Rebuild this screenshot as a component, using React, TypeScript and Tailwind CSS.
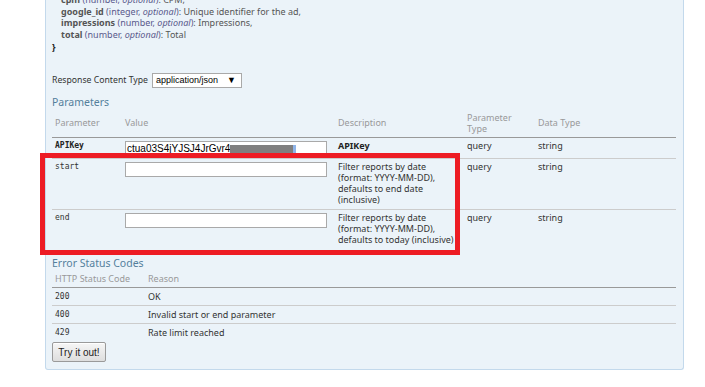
const modelLines = [
  { name: 'cpm', type: 'number', desc: 'CPM,' },
  { name: 'google_id', type: 'integer', desc: 'Unique identifier for the ad,' },
  { name: 'impressions', type: 'number', desc: 'Impressions,' },
  { name: 'total', type: 'number', desc: 'Total' },
];

const params = [
  { name: 'APIKey', strong: true, value: 'ctua03S4jYJSJ4JrGvr4', desc: 'APIKey', type: 'query', dataType: 'string' },
  {
    name: 'start',
    strong: false,
    value: '',
    desc: 'Filter reports by date (format: YYYY-MM-DD), defaults to end date (inclusive)',
    type: 'query',
    dataType: 'string',
  },
  {
    name: 'end',
    strong: false,
    value: '',
    desc: 'Filter reports by date (format: YYYY-MM-DD), defaults to today (inclusive)',
    type: 'query',
    dataType: 'string',
  },
];

const errors = [
  { code: '200', reason: 'OK' },
  { code: '400', reason: 'Invalid start or end parameter' },
  { code: '429', reason: 'Rate limit reached' },
];

const mono = "font-['DejaVu_Sans_Mono',monospace] text-[8px]";

export default function App() {
  return (
    <div className="relative h-[387px] w-[705px] overflow-hidden bg-white font-['Noto_Sans',sans-serif] text-[9px] text-[#333]">
      <div className="ml-[45px] mt-[-6px] w-[639px] rounded-b-[3px] border border-t-0 border-[#c3d9ec] bg-[#ebf3f9] px-[6px] pb-[7px]">
        <div className="pl-[9px] leading-[11.5px]">
          {modelLines.map((l) => (
            <div key={l.name}>
              <span className="font-bold text-[#555]">{l.name}</span>{' '}
              <span className="text-[#5a5a8c]">
                (<span>{l.type}</span>, <span className="italic">optional</span>)
              </span>
              <span className="text-[#555]">: {l.desc}</span>
            </div>
          ))}
        </div>
        <div className="mt-px font-bold leading-[12px] text-[#222]">{'}'}</div>

        <div className="mt-[20px] flex h-[15px] items-center">
          <span className="text-[8.7px] text-[#333]">Response Content Type</span>
          <div className="ml-[4px] flex h-[15px] w-[90px] items-center justify-between border border-[#a9a9a9] bg-white pl-[3px] pr-[5px] font-['Liberation_Sans',sans-serif] text-[9px] text-black">
            <span>application/json</span>
            <span className="text-[9px]">▼</span>
          </div>
        </div>

        <h4 className="mt-[8px] text-[10.5px] leading-[13px] text-[#547f9c]">Parameters</h4>
        <table className="w-[624px] table-fixed border-collapse">
          <colgroup>
            <col className="w-[70px]" />
            <col className="w-[213px]" />
            <col className="w-[129px]" />
            <col className="w-[71px]" />
            <col className="w-[141px]" />
          </colgroup>
          <thead>
            <tr className="border-b border-[#999] text-left text-[#999]">
              <th className="pb-[3px] pt-[4px] pl-[3px] font-normal leading-[10.7px]">Parameter</th>
              <th className="pb-[3px] pt-[4px] pl-[3px] font-normal leading-[10.7px]">Value</th>
              <th className="pb-[3px] pt-[4px] pl-[3px] font-normal leading-[10.7px]">Description</th>
              <th className="pb-[3px] pt-[4px] pl-[3px] font-normal leading-[10.7px]">
                Parameter
                <br />
                Type
              </th>
              <th className="pb-[3px] pt-[4px] pl-[3px] font-normal leading-[10.7px]">Data Type</th>
            </tr>
          </thead>
          <tbody className="align-top leading-[10.7px]">
            {params.map((p, i) => {
              const cell = p.strong ? 'pt-[3px] pb-[2px] pl-[3px]' : 'pt-[3px] pb-[4px] pl-[3px]';
              return (
                <tr key={p.name} className={i < params.length - 1 ? 'border-b border-[#ccc]' : ''}>
                  <td className={`${cell} ${mono} leading-[10.7px] ${p.strong ? 'font-bold text-[#222]' : 'text-[#333]'}`}>
                    {p.name}
                  </td>
                  <td className={cell}>
                    <div className="flex h-[15px] w-[202px] items-center border border-[#a9a9a9] bg-white pl-px font-['Liberation_Sans',sans-serif] text-[10px] text-black">
                      {p.value && (
                        <>
                          <span>{p.value}</span>
                          <span className="flex h-[8px] w-[66px]">
                            <span className="h-full flex-1 bg-[#7f7f7f]" />
                            <span className="h-full w-[3px] bg-[#8fb4e8]" />
                          </span>
                        </>
                      )}
                    </div>
                  </td>
                  <td className={`${cell} pr-[8px]`}>
                    {p.strong ? <span className="font-bold text-[#222]">{p.desc}</span> : p.desc}
                  </td>
                  <td className={cell}>{p.type}</td>
                  <td className={cell}>{p.dataType}</td>
                </tr>
              );
            })}
          </tbody>
        </table>

        <h4 className="mt-[8px] text-[10.5px] leading-[13px] text-[#547f9c]">Error Status Codes</h4>
        <table className="w-[624px] table-fixed border-collapse">
          <colgroup>
            <col className="w-[93px]" />
            <col />
          </colgroup>
          <thead>
            <tr className="border-b border-[#999] text-left text-[#999]">
              <th className="py-[3px] pl-[3px] font-normal leading-[11px]">HTTP Status Code</th>
              <th className="py-[3px] pl-[3px] font-normal leading-[11px]">Reason</th>
            </tr>
          </thead>
          <tbody className="leading-[11px]">
            {errors.map((e, i) => (
              <tr key={e.code} className={i < errors.length - 1 ? 'border-b border-[#ccc]' : ''}>
                <td className={`h-[17px] py-[3px] pl-[3px] leading-[11px] ${mono}`}>{e.code}</td>
                <td className="h-[17px] py-[3px] pl-[3px]">{e.reason}</td>
              </tr>
            ))}
          </tbody>
        </table>

        <button className="mt-px h-[20px] w-[54px] rounded-[2px] border border-[#9a9a9a] bg-gradient-to-b from-[#f6f6f6] to-[#dedede] font-['Liberation_Sans',sans-serif] text-[10px] text-[#222] shadow-[inset_0_1px_0_#fff]">
          Try it out!
        </button>
      </div>

      <div className="absolute left-[40px] top-[153px] h-[102px] w-[420px] border-[5px] border-[#ed1c24]" />
    </div>
  );
}
